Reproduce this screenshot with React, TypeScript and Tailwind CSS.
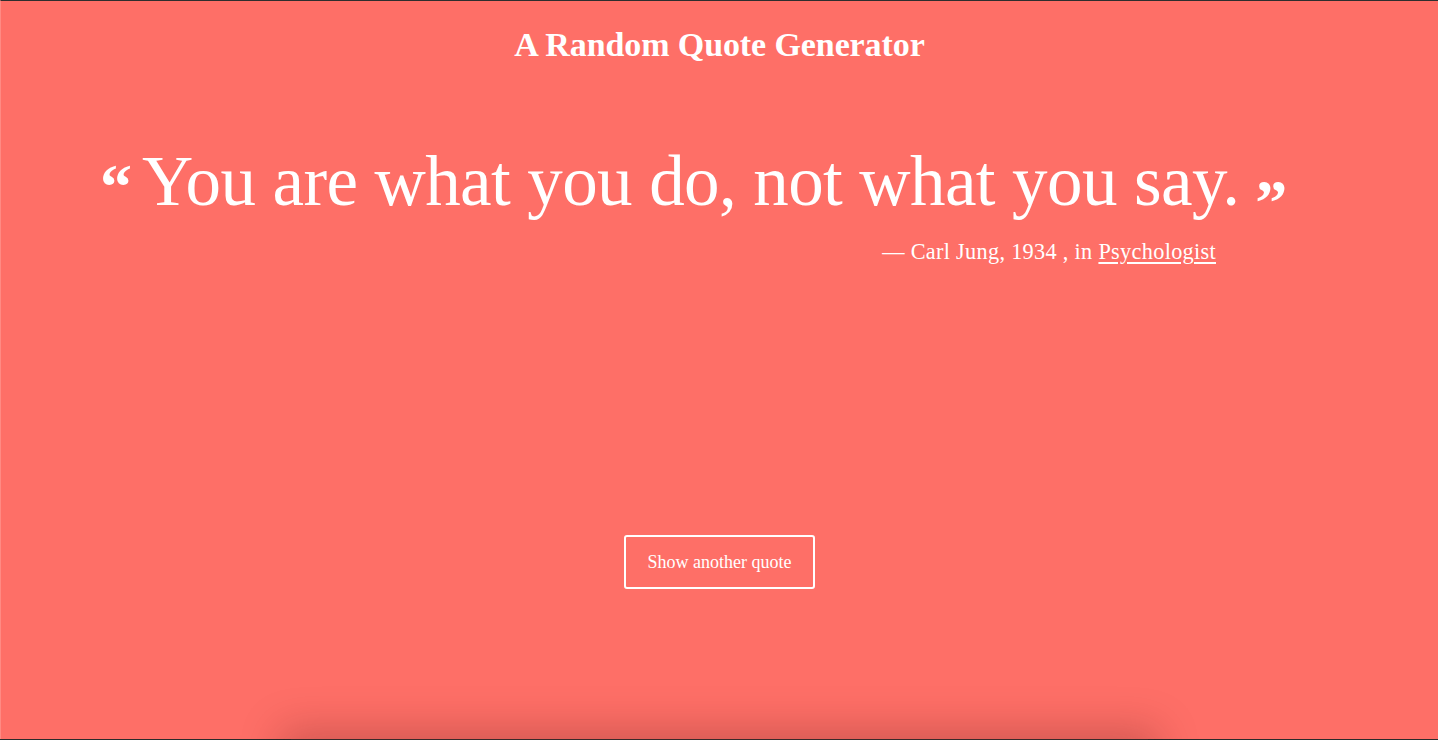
export default function App() {
  const serif = { fontFamily: '"Liberation Serif", "DejaVu Serif", serif' };
  return (
    <div className="w-[1438px] h-[740px] overflow-hidden bg-[#2b2b2b]" style={serif}>
      <div className="h-[739px] bg-[#fe6f67] border-t border-[#2e2e2e] border-l border-l-[#ff8a83] flex flex-col text-white">
        <h1 className="text-center font-bold text-[34px] leading-none mt-[27px] tracking-[-0.1px]">
          A Random Quote Generator
        </h1>
        <div className="mt-[84px] pl-[99px] flex items-start">
          <span className="font-bold text-[64px] leading-none mt-[9px] mr-[10px]">“</span>
          <span className="text-[71px] leading-none tracking-[-0.6px]">You are what you do, not what you say.</span>
          <span className="font-bold text-[64px] leading-none mt-[25px] ml-[16px]">”</span>
        </div>
        <div className="flex justify-end pr-[222px] mt-[6px] text-[22.3px] leading-none tracking-[0.3px]">
          <span>
            — Carl Jung, 1934 , in <a className="underline underline-offset-[3px]" href="#">Psychologist</a>
          </span>
        </div>
        <div className="flex justify-center mt-[272px]">
          <button className="w-[191px] h-[54px] border-2 border-white rounded-[3px] text-[18px] text-white">
            Show another quote
          </button>
        </div>
      </div>
      <div className="mx-auto w-[857px] h-[40px] bg-[#3a2a2a] shadow-[0_0_40px_10px_rgba(80,20,20,0.25)]" />
    </div>
  );
}
